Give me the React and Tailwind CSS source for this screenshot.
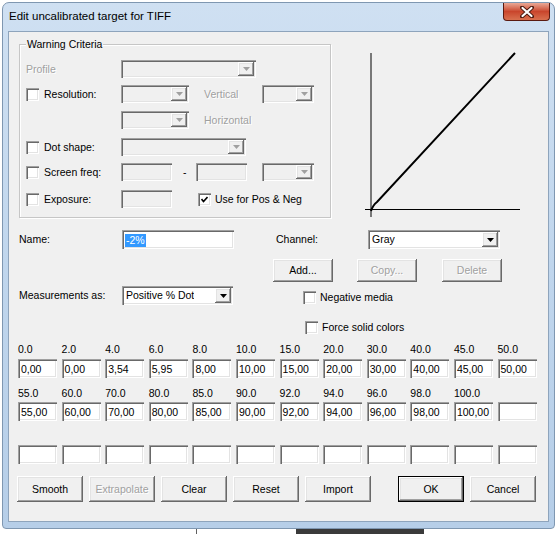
import React from 'react';

const sunken =
  'shadow-[inset_1px_1px_0_#a0a0a0,inset_2px_2px_0_#696969,inset_-1px_-1px_0_#ffffff,inset_-2px_-2px_0_#e3e3e3]';
const raised =
  'shadow-[inset_-1px_-1px_0_#696969,inset_1px_1px_0_#ffffff,inset_-2px_-2px_0_#a0a0a0,inset_2px_2px_0_#e3e3e3]';
const dim = 'text-[#a0a0a0] [text-shadow:1px_1px_0_#ffffff]';

const Arrow = ({ disabled }) => (
  <svg width="7" height="4" viewBox="0 0 7 4">
    <path d="M0 0h7L3.5 4z" fill={disabled ? '#a0a0a0' : '#000'} />
  </svg>
);

const Combo = ({ className = '', value, disabled }) => (
  <div
    className={`${sunken} ${disabled ? 'bg-[#f0f0f0]' : 'bg-white'} flex items-center justify-between pl-[4px] pr-[2px] py-[2px] ${className}`}
  >
    <span className="truncate">{value}</span>
    <div className={`${raised} bg-[#f0f0f0] w-[16px] h-full flex items-center justify-center`}>
      <Arrow disabled={disabled} />
    </div>
  </div>
);

const Edit = ({ className = '', disabled, children }) => (
  <div
    className={`${sunken} ${disabled ? 'bg-[#f0f0f0]' : 'bg-white'} flex items-center pl-[3px] pt-[1px] ${className}`}
  >
    {children}
  </div>
);

const Check = ({ checked }) => (
  <div className={`${sunken} bg-white w-[13px] h-[13px] flex items-center justify-center shrink-0`}>
    {checked && (
      <svg width="7" height="7" viewBox="0 0 7 7">
        <path d="M0.5 3 L2.5 5.5 L6.5 1" stroke="#000" strokeWidth="1.6" fill="none" />
      </svg>
    )}
  </div>
);

const Btn = ({ className = '', disabled, def, children }) =>
  def ? (
    <div className={`border border-black ${className}`}>
      <div className={`${raised} bg-[#f0f0f0] w-full h-full flex items-center justify-center`}>{children}</div>
    </div>
  ) : (
    <div
      className={`${raised} bg-[#f0f0f0] flex items-center justify-center ${disabled ? dim : ''} ${className}`}
    >
      {children}
    </div>
  );

const rows = [
  {
    labels: ['0.0', '2.0', '4.0', '6.0', '8.0', '10.0', '15.0', '20.0', '30.0', '40.0', '45.0', '50.0'],
    values: ['0,00', '0,00', '3,54', '5,95', '8,00', '10,00', '15,00', '20,00', '30,00', '40,00', '45,00', '50,00'],
    mt: 'mt-[9px]',
    gap: 'mt-[3px]',
  },
  {
    labels: ['55.0', '60.0', '70.0', '80.0', '85.0', '90.0', '92.0', '94.0', '96.0', '98.0', '100.0', ''],
    values: ['55,00', '60,00', '70,00', '80,00', '85,00', '90,00', '92,00', '94,00', '96,00', '98,00', '100,00', ''],
    mt: 'mt-[9px]',
    gap: 'mt-[2px]',
  },
  {
    labels: Array(12).fill(''),
    values: Array(12).fill(''),
    mt: 'mt-[9px]',
    gap: 'mt-[2px]',
  },
];

export default function App() {
  return (
    <div className="w-[559px] h-[534px] bg-white overflow-hidden font-['Liberation_Sans',Arial,sans-serif] text-[10.5px] leading-[13px] text-black">
      <div className="ml-[2px] mt-[2px] w-[553px] h-[527px] rounded-t-[7px] rounded-b-[4px] border border-[#7f97b1] bg-linear-to-b from-[#cfe0f2] via-[#c0d6ed] to-[#b6cee8] flex flex-col">
        {/* title bar */}
        <div className="h-[28px] flex items-start justify-between pl-[6px] pr-[4px]">
          <span className="mt-[6px] text-[11.5px] leading-[15px] text-black">Edit uncalibrated target for TIFF</span>
          <div className="w-[47px] h-[18px] rounded-b-[4px] border border-[#5a1a10] border-t-0 bg-linear-to-b from-[#e9a896] via-[#c9452c] to-[#d8704f] flex items-center justify-center">
            <svg width="14" height="12" viewBox="0 0 14 12">
              <path d="M2 1.5 L12 10.5 M12 1.5 L2 10.5" stroke="#4a1a10" strokeWidth="4" strokeLinecap="round" />
              <path d="M2.5 2 L11.5 10 M11.5 2 L2.5 10" stroke="#fff" strokeWidth="2.2" strokeLinecap="round" />
            </svg>
          </div>
        </div>

        {/* client area */}
        <div className="ml-[5px] w-[541px] h-[491px] border border-[#8ea4bc] bg-[#f0f0f0]">
          <div className="flex mt-[12px]">
            {/* Warning Criteria group */}
            <div className="relative ml-[10px] w-[312px] h-[174px] border border-[#c6c6c6] shadow-[inset_1px_1px_0_#ffffff,1px_1px_0_#ffffff]">
              <span className="absolute left-[6px] -top-[7px] px-[1px] bg-[#f0f0f0]">Warning Criteria</span>
              <div className="pl-[6px]">
                <div className="mt-[15px] flex items-center h-[18px]">
                  <div className={`w-[95px] ${dim}`}>Profile</div>
                  <Combo disabled className="w-[135px] h-[18px]" />
                </div>
                <div className="mt-[7px] flex items-center h-[18px]">
                  <div className="w-[95px] flex items-center">
                    <Check />
                    <span className="ml-[5px]">Resolution:</span>
                  </div>
                  <Combo disabled className="w-[68px] h-[18px]" />
                  <div className={`ml-[15px] w-[58px] ${dim}`}>Vertical</div>
                  <Combo disabled className="w-[52px] h-[18px]" />
                </div>
                <div className="mt-[8px] flex items-center h-[18px]">
                  <div className="w-[95px]" />
                  <Combo disabled className="w-[68px] h-[18px]" />
                  <div className={`ml-[15px] ${dim}`}>Horizontal</div>
                </div>
                <div className="mt-[9px] flex items-center h-[18px]">
                  <div className="w-[95px] flex items-center">
                    <Check />
                    <span className="ml-[5px]">Dot shape:</span>
                  </div>
                  <Combo disabled className="w-[125px] h-[18px]" />
                </div>
                <div className="mt-[7px] flex items-center h-[18px]">
                  <div className="w-[95px] flex items-center">
                    <Check />
                    <span className="ml-[5px]">Screen freq:</span>
                  </div>
                  <Edit disabled className="w-[51px] h-[18px]" />
                  <div className="w-[24px] pl-[11px]">-</div>
                  <Edit disabled className="w-[51px] h-[18px]" />
                  <Combo disabled className="ml-[15px] w-[52px] h-[18px]" />
                </div>
                <div className="mt-[9px] flex items-center h-[18px]">
                  <div className="w-[95px] flex items-center">
                    <Check />
                    <span className="ml-[5px]">Exposure:</span>
                  </div>
                  <Edit disabled className="w-[51px] h-[18px]" />
                  <div className="ml-[26px] flex items-center">
                    <Check checked />
                    <span className="ml-[4px]">Use for Pos &amp; Neg</span>
                  </div>
                </div>
              </div>
            </div>

            {/* curve preview */}
            <svg className="ml-[29px]" width="165" height="175" viewBox="0 0 165 175">
              <line x1="11" y1="9" x2="11" y2="173" stroke="#000" strokeWidth="1" />
              <line x1="5" y1="165.5" x2="160" y2="165.5" stroke="#000" strokeWidth="1" />
              <path d="M11 167 Q13 161 17 158 L155 9" stroke="#000" strokeWidth="2" fill="none" />
            </svg>
          </div>

          {/* Name / Channel */}
          <div className="mt-[11px] pl-[10px] flex items-center h-[19px]">
            <div className="w-[103px]">Name:</div>
            <Edit className="w-[112px] h-[19px]">
              <span className="bg-[#3399ff] text-white px-[1px]">-2%</span>
            </Edit>
            <div className="ml-[42px] w-[92px]">Channel:</div>
            <Combo value="Gray" className="w-[132px] h-[19px]" />
          </div>

          {/* Add / Copy / Delete */}
          <div className="mt-[10px] pl-[264px] flex">
            <Btn className="w-[60px] h-[23px]">Add...</Btn>
            <Btn disabled className="ml-[24px] w-[60px] h-[23px]">Copy...</Btn>
            <Btn disabled className="ml-[25px] w-[60px] h-[23px]">Delete</Btn>
          </div>

          {/* Measurements */}
          <div className="mt-[4px] pl-[10px] flex items-start">
            <div className="w-[103px] h-[19px] flex items-center">Measurements as:</div>
            <Combo value="Positive % Dot" className="w-[111px] h-[19px]" />
            <div className="ml-[70px] flex flex-col">
              <div className="mt-[5px] flex items-center">
                <Check />
                <span className="ml-[4px]">Negative media</span>
              </div>
              <div className="mt-[17px] ml-[2px] flex items-center">
                <Check />
                <span className="ml-[4px]">Force solid colors</span>
              </div>
            </div>
          </div>

          {/* target values */}
          {rows.map((r, i) => (
            <div key={i} className={`${r.mt} ml-[9px] flex gap-x-[4.6px]`}>
              {r.labels.map((l, j) => (
                <div key={j} className="w-[39px] flex flex-col">
                  <div className="h-[13px]">{l}</div>
                  <Edit className={`${r.gap} w-[39px] h-[19px]`}>{r.values[j]}</Edit>
                </div>
              ))}
            </div>
          ))}

          {/* bottom buttons */}
          <div className="mt-[12px] ml-[8px] flex">
            <Btn className="w-[66px] h-[26px]">Smooth</Btn>
            <Btn disabled className="ml-[6px] w-[66px] h-[26px]">Extrapolate</Btn>
            <Btn className="ml-[6px] w-[66px] h-[26px]">Clear</Btn>
            <Btn className="ml-[6px] w-[66px] h-[26px]">Reset</Btn>
            <Btn className="ml-[6px] w-[66px] h-[26px]">Import</Btn>
            <Btn def className="ml-[27px] w-[66px] h-[26px]">OK</Btn>
            <Btn className="ml-[6px] w-[66px] h-[26px]">Cancel</Btn>
          </div>
        </div>
      </div>
      <div className="flex h-[6px]">
        <div className="ml-[196px] w-[1px] bg-[#606060]" />
        <div className="ml-[99px] w-[128px] bg-[#3a3a3a]" />
      </div>
    </div>
  );
}
